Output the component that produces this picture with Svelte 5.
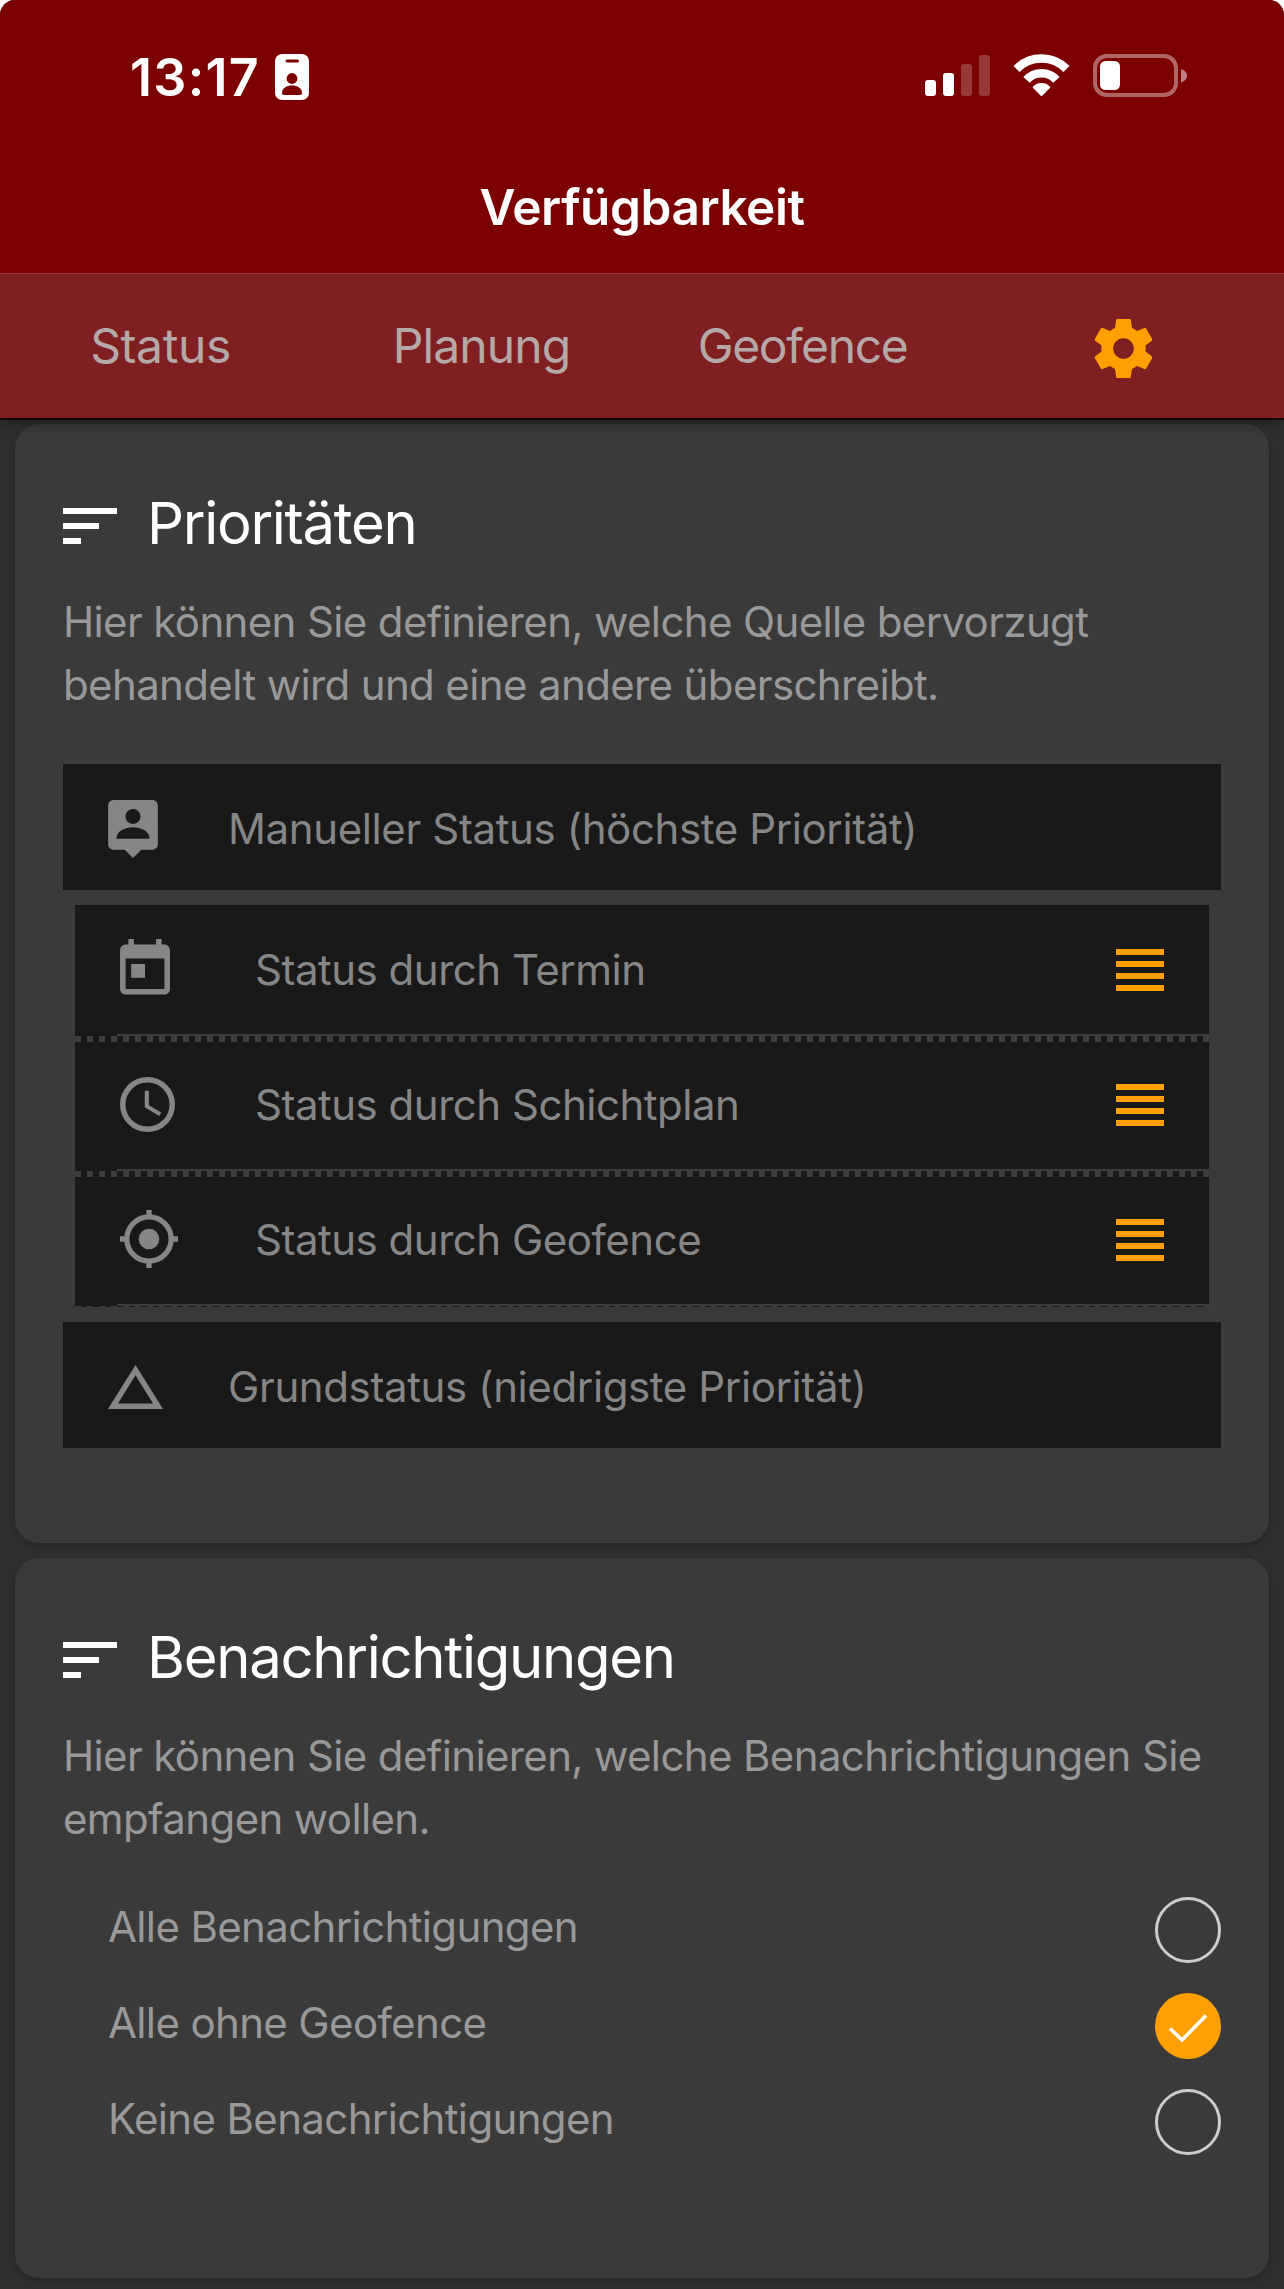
<script>
	let activeTab = $state('settings');
	let selected = $state('noGeofence');

	const tabs = [
		{ id: 'status', label: 'Status' },
		{ id: 'planning', label: 'Planung' },
		{ id: 'geofence', label: 'Geofence' }
	];

	const sources = [
		{ icon: 'calendar', label: 'Status durch Termin' },
		{ icon: 'clock', label: 'Status durch Schichtplan' },
		{ icon: 'target', label: 'Status durch Geofence' }
	];

	const options = [
		{ id: 'all', label: 'Alle Benachrichtigungen' },
		{ id: 'noGeofence', label: 'Alle ohne Geofence' },
		{ id: 'none', label: 'Keine Benachrichtigungen' }
	];
</script>

{#snippet sortIcon()}
	<svg class="sort" width="54" height="36" viewBox="0 0 54 36" fill="currentColor">
		<path d="M0 0h54v6H0zM0 15h36v6H0zM0 30h18v6H0z" />
	</svg>
{/snippet}

{#snippet sourceIcon(name)}
	{#if name === 'calendar'}
		<svg width="50" height="61" viewBox="3 1 18 22" fill="currentColor">
			<path d="M19 3h-1V1h-2v2H8V1H6v2H5c-1.1 0-2 .9-2 2v14c0 1.1.9 2 2 2h14c1.1 0 2-.9 2-2V5c0-1.1-.9-2-2-2zm0 16H5V8h14v11zM7 10h5v5H7z" />
		</svg>
	{:else if name === 'clock'}
		<svg width="55" height="55" viewBox="2 2 20 20" fill="currentColor">
			<circle cx="12" cy="12" r="9" fill="none" stroke="currentColor" stroke-width="2" />
			<path d="M12.5 7H11v6l5.25 3.15.75-1.23-4.5-2.67z" />
		</svg>
	{:else}
		<svg class="target" width="58" height="58" viewBox="1 1 22 22" fill="currentColor">
			<circle cx="12" cy="12" r="3.9" />
			<circle cx="12" cy="12" r="8.4" fill="none" stroke="currentColor" stroke-width="2" />
			<path d="M11 1h2v2.5h-2zM11 20.500h2V23h-2zM1 11h2.500v2H1zM20.500 11H23v2h-2.500z" />
		</svg>
	{/if}
{/snippet}

<div class="page">
	<header>
		<div class="status-bar">
			<div class="clock">
				<span class="time">13:17</span>
				<svg width="34" height="46" viewBox="0 0 34 46">
					<rect width="34" height="46" rx="7" fill="#fff" />
					<rect x="10.500" y="5.500" width="13.500" height="3" rx="1.500" fill="#7d0000" />
					<circle cx="17" cy="24.500" r="5.400" fill="#7d0000" />
					<path d="M7 39c0-5 4.500-7.500 10-7.500s10 2.500 10 7.500c0 1.300-.5 2-2 2H9c-1.500 0-2-.7-2-2z" fill="#7d0000" />
				</svg>
			</div>
			<div class="signals">
				<svg width="65" height="46" viewBox="0 0 65 46" fill="#fff">
					<rect y="26" width="11" height="16" rx="3" />
					<rect x="18" y="19" width="11" height="23" rx="3" />
					<rect x="36" y="10" width="11" height="32" rx="3" opacity=".22" />
					<rect x="54" y="1" width="11" height="41" rx="3" opacity=".22" />
				</svg>
				<svg width="57" height="46" viewBox="0 0 57 46" fill="none" stroke="#fff" stroke-width="8.500">
					<path d="M3.500 15a35 35 0 0 1 50 0" />
					<path d="M13.500 25.800a20.200 20.200 0 0 1 30 0" />
					<path d="M20.800 33.200a11 11 0 0 1 15.400 0L28.500 41z" fill="#fff" stroke-width="2" stroke-linejoin="round" />
				</svg>
				<svg width="95" height="46" viewBox="0 0 95 46" fill="#fff">
					<rect x="2" y="2" width="81" height="39" rx="12" fill="none" stroke="#fff" stroke-width="4" opacity=".4" />
					<rect x="7" y="7" width="20" height="29" rx="5.500" />
					<path d="M88 15c4 1.200 6 3.800 6 6.700s-2 5.500-6 6.700z" opacity=".5" />
				</svg>
			</div>
		</div>
		<h1>Verfügbarkeit</h1>
		<nav>
			{#each tabs as tab}
				<button class="tab {tab.id}" onclick={() => (activeTab = tab.id)}>{tab.label}</button>
			{/each}
			<button class="tab" class:active={activeTab === 'settings'} onclick={() => (activeTab = 'settings')} aria-label="Einstellungen">
				<svg width="71" height="71" viewBox="0 0 24 24" fill="currentColor">
					<path d="M19.430 12.980c.04-.32.07-.64.07-.98s-.03-.66-.07-.98l2.110-1.650c.19-.15.24-.42.12-.64l-2-3.460c-.12-.22-.39-.3-.61-.22l-2.490 1c-.52-.4-1.080-.73-1.690-.98l-.38-2.650C14.460 2.180 14.250 2 14 2h-4c-.25 0-.46.18-.49.42l-.38 2.650c-.61.25-1.170.59-1.690.98l-2.490-1c-.23-.09-.49 0-.61.22l-2 3.460c-.13.22-.07.49.12.64l2.110 1.650c-.04.32-.07.65-.07.98s.03.66.07.98l-2.110 1.650c-.19.15-.24.42-.12.64l2 3.460c.12.22.39.3.61.22l2.490-1c.52.4 1.080.73 1.690.98l.38 2.650c.03.24.24.42.49.42h4c.25 0 .46-.18.49-.42l.38-2.650c.61-.25 1.170-.59 1.690-.98l2.490 1c.23.09.49 0 .61-.22l2-3.460c.12-.22.07-.49-.12-.64l-2.110-1.650zM12 15.500c-1.930 0-3.500-1.570-3.500-3.500s1.570-3.500 3.500-3.500 3.500 1.570 3.500 3.500-1.570 3.500-3.500 3.500z" />
				</svg>
			</button>
		</nav>
	</header>

	<main>
		<section class="card">
			<h2>{@render sortIcon()}Prioritäten</h2>
			<p>Hier können Sie definieren, welche Quelle bervorzugt<br />behandelt wird und eine andere überschreibt.</p>

			<div class="fixed-row">
				<span class="icon">
					<svg width="50" height="58" viewBox="3 2 18 21" fill="currentColor">
						<path d="M19 2H5c-1.100 0-2 .9-2 2v14c0 1.100.9 2 2 2h4l3 3 3-3h4c1.100 0 2-.9 2-2V4c0-1.100-.9-2-2-2zm-7 3.300c1.490 0 2.700 1.210 2.700 2.700s-1.210 2.700-2.700 2.700S9.300 9.490 9.300 8s1.210-2.700 2.700-2.700zM18 16H6c0-2.600 3-4.100 6-4.100s6 1.500 6 4.100z" />
					</svg>
				</span>
				Manueller Status (höchste Priorität)
			</div>

			<ul>
				{#each sources as source}
					<li>
						<div class="source">
							<span class="icon">{@render sourceIcon(source.icon)}</span>
							<span class="label">{source.label}</span>
							<svg class="handle" width="48" height="42" viewBox="0 0 48 42" fill="currentColor">
								<path d="M0 0h48v6H0zM0 12h48v6H0zM0 24h48v6H0zM0 36h48v6H0z" />
							</svg>
						</div>
						<div class="line"></div>
						<div class="dots"></div>
					</li>
				{/each}
			</ul>

			<div class="fixed-row">
				<span class="icon">
					<svg width="55" height="44" viewBox="2 4 20 16" fill="currentColor">
						<path d="M12 7.770L18.390 18H5.610L12 7.770M12 4L2 20h20L12 4z" />
					</svg>
				</span>
				Grundstatus (niedrigste Priorität)
			</div>
		</section>

		<section class="card notifications">
			<h2>{@render sortIcon()}Benachrichtigungen</h2>
			<p>Hier können Sie definieren, welche Benachrichtigungen Sie<br />empfangen wollen.</p>

			<div class="options">
				{#each options as option}
					<button class="option" onclick={() => (selected = option.id)}>
						<span>{option.label}</span>
						<span class="radio" class:checked={selected === option.id}>
							{#if selected === option.id}
								<svg width="66" height="66" viewBox="0 0 66 66" fill="none" stroke="#fff" stroke-width="3.600">
									<path d="M15 35.500l12 11.500L51 22.500" />
								</svg>
							{/if}
						</span>
					</button>
				{/each}
			</div>
		</section>
	</main>
</div>

<style>
	:global(body) {
		background: #fff;
	}
	.page {
		width: 1284px;
		height: 2289px;
		overflow: hidden;
		border-radius: 15px 15px 0 0;
		background: #2f2f2f;
		font-family: Inter, 'Liberation Sans', sans-serif;
	}
	svg {
		display: block;
		flex: none;
	}
	button {
		padding: 0;
		border: none;
		background: none;
		font: inherit;
		cursor: pointer;
	}

	header {
		position: relative;
		background: #7d0000;
		border-bottom: 2px solid #0c0a06;
		box-shadow: 0 4px 14px rgba(0, 0, 0, 0.3);
	}
	.status-bar {
		display: flex;
		justify-content: space-between;
		align-items: center;
		height: 154px;
		padding: 0 96px 0 130px;
	}
	.clock {
		display: flex;
		align-items: center;
		gap: 15px;
	}
	.time {
		color: #fff;
		font-size: 52px;
		font-weight: 600;
		letter-spacing: 1.3px;
	}
	.signals {
		display: flex;
		gap: 23px;
	}
	h1 {
		margin: 0;
		padding-bottom: 13px;
		color: #fff;
		font-size: 49.5px;
		font-weight: 600;
		line-height: 106px;
		letter-spacing: -0.42px;
		text-align: center;
	}
	nav {
		display: grid;
		grid-template-columns: repeat(4, 1fr);
		height: 144px;
		border-top: 1px solid #98393c;
		background: #7f1f21;
	}
	.tab {
		display: flex;
		justify-content: center;
		align-items: center;
		padding-bottom: 2px;
		color: #b5a9a7;
		font-size: 48px;
		letter-spacing: -0.4px;
	}
	.tab.planning {
		letter-spacing: -0.9px;
	}
	.tab.geofence {
		letter-spacing: -1.4px;
	}
	.tab.active {
		padding: 4px 1px 0 0;
		color: #ffa000;
	}

	main {
		display: flex;
		flex-direction: column;
		gap: 15px;
		padding: 4px 15px 0;
	}
	.card {
		padding: 64px 48px 95px;
		border-radius: 24px;
		background: #3a3a3a;
		box-shadow: 0 3px 8px rgba(0, 0, 0, 0.2);
	}
	.notifications {
		padding-bottom: 108px;
	}
	h2 {
		display: flex;
		align-items: center;
		gap: 30px;
		margin: 0 0 32px;
		color: #fff;
		font-size: 58px;
		font-weight: 400;
		line-height: 70px;
		letter-spacing: -1.3px;
	}
	.sort {
		margin-top: 6px;
	}
	p {
		margin: 0;
		color: #999;
		font-size: 42px;
		line-height: 63px;
		letter-spacing: -0.63px;
		white-space: nowrap;
	}

	.fixed-row {
		display: flex;
		align-items: center;
		box-sizing: border-box;
		height: 126px;
		padding: 3px 45px 0;
		background: #191919;
		color: #868686;
		font-size: 42px;
		letter-spacing: -0.38px;
	}
	p + .fixed-row {
		margin-top: 48px;
	}
	.fixed-row .icon {
		width: 120px;
	}
	ul {
		margin: 15px 12px;
		padding: 0;
		list-style: none;
	}
	li {
		background: #191919;
	}
	li:first-child {
		padding-top: 2px;
	}
	.source {
		display: flex;
		align-items: center;
		box-sizing: border-box;
		height: 127px;
		padding: 0 45px 2px;
		color: #868686;
		font-size: 42px;
		letter-spacing: -0.49px;
	}
	.source .icon {
		width: 135px;
	}
	.target {
		margin-bottom: 1px;
	}
	.label {
		flex: 1;
	}
	.handle {
		color: #ffa000;
	}
	.line {
		height: 2px;
		margin-left: 42px;
		background: #3c3c3c;
	}
	.dots {
		height: 6px;
		background: repeating-linear-gradient(90deg, #3c3c3c 0 6px, transparent 6px 12px);
	}
	li:last-child .dots {
		height: 1px;
	}

	.options {
		margin-top: 32px;
	}
	.option {
		display: flex;
		justify-content: space-between;
		align-items: center;
		width: 100%;
		height: 96px;
		padding-left: 45px;
		color: #999;
		font-size: 42px;
		letter-spacing: -0.64px;
	}
	.option > span:first-child {
		padding-bottom: 7px;
	}
	.radio {
		box-sizing: border-box;
		width: 66px;
		height: 66px;
		border: 3px solid #ccc;
		border-radius: 50%;
	}
	.radio.checked {
		border: none;
		background: #ffa000;
	}
</style>
